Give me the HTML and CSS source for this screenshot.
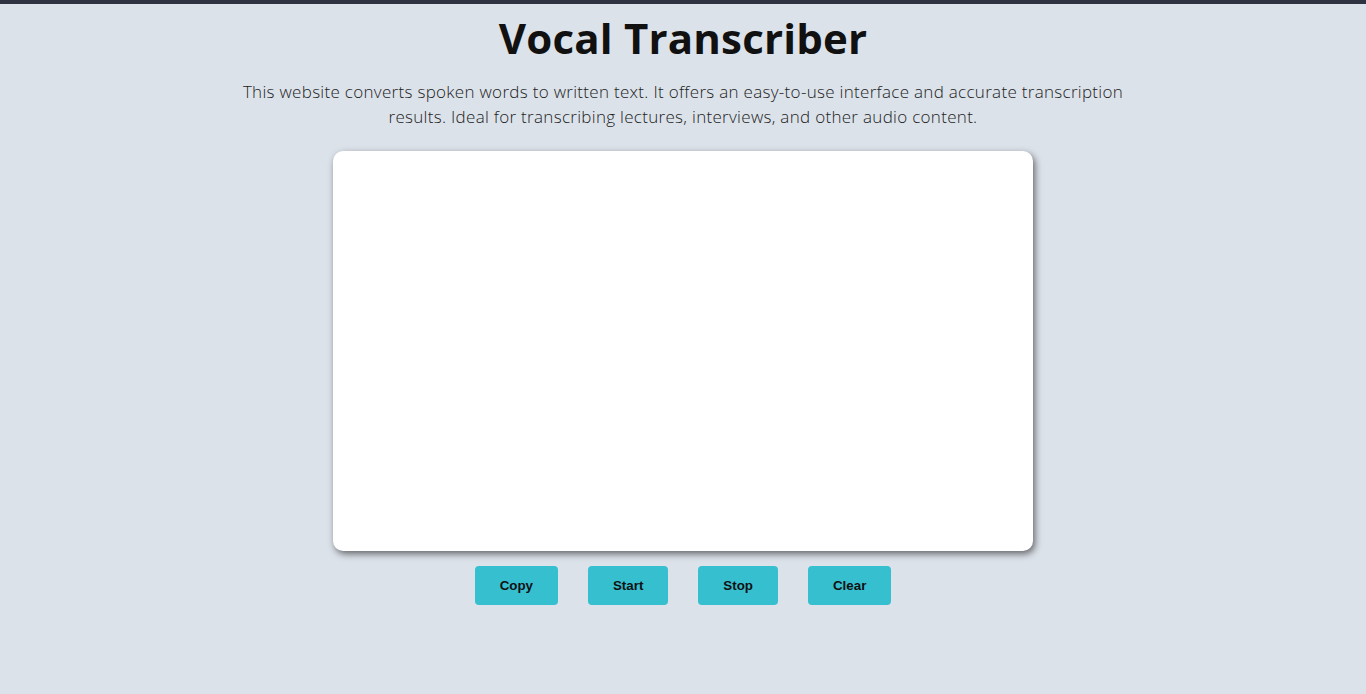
FILE: index.html
```html
<!DOCTYPE html>
<html lang="en">
<head>
<meta charset="utf-8">
<title>Vocal Transcriber</title>
<link rel="stylesheet" href="styles.css">
</head>
<body>
<main class="page">
  <h1 class="title">Vocal Transcriber</h1>
  <p class="intro">This website converts spoken words to written text. It offers an easy-to-use interface and accurate transcription<br>results. Ideal for transcribing lectures, interviews, and other audio content.</p>
  <textarea class="transcript" aria-label="Transcript"></textarea>
  <div class="actions">
    <button class="btn">Copy</button>
    <button class="btn">Start</button>
    <button class="btn">Stop</button>
    <button class="btn">Clear</button>
  </div>
</main>
</body>
</html>
```

FILE: styles.css
```css
html, body {
  margin: 0;
  padding: 0;
}
body {
  background: #dce2ea;
  border-top: 4px solid #2f3341;
  min-height: 690px;
  font-family: "Open Sans", "DejaVu Sans", sans-serif;
}
.page {
  display: flex;
  flex-direction: column;
  align-items: center;
}
.title {
  margin: 12px 0 0;
  font-family: "Open Sans", sans-serif;
  font-weight: 700;
  font-size: 42px;
  line-height: 44px;
  color: #111;
  letter-spacing: 0.2px;
}
.intro {
  margin: 19px 0 0;
  text-align: center;
  font-size: 17px;
  font-weight: 300;
  line-height: 25px;
  letter-spacing: 0.3px;
  color: #222;
}
.transcript {
  margin-top: 22px;
  width: 700px;
  height: 400px;
  box-sizing: border-box;
  border: none;
  border-radius: 10px;
  background: #fff;
  box-shadow: 2px 3px 7px rgba(0, 0, 0, 0.55);
  resize: none;
  outline: none;
  padding: 12px;
  font-family: "Open Sans", sans-serif;
  font-size: 16px;
}
.actions {
  margin-top: 15px;
  display: flex;
  gap: 30px;
}
.btn {
  background: #35bfcf;
  border: none;
  border-radius: 4px;
  padding: 12px 25px;
  font-family: "Liberation Sans", Arial, sans-serif;
  font-weight: bold;
  font-size: 13.333px;
  line-height: 15px;
  color: #111;
  cursor: pointer;
}
```
